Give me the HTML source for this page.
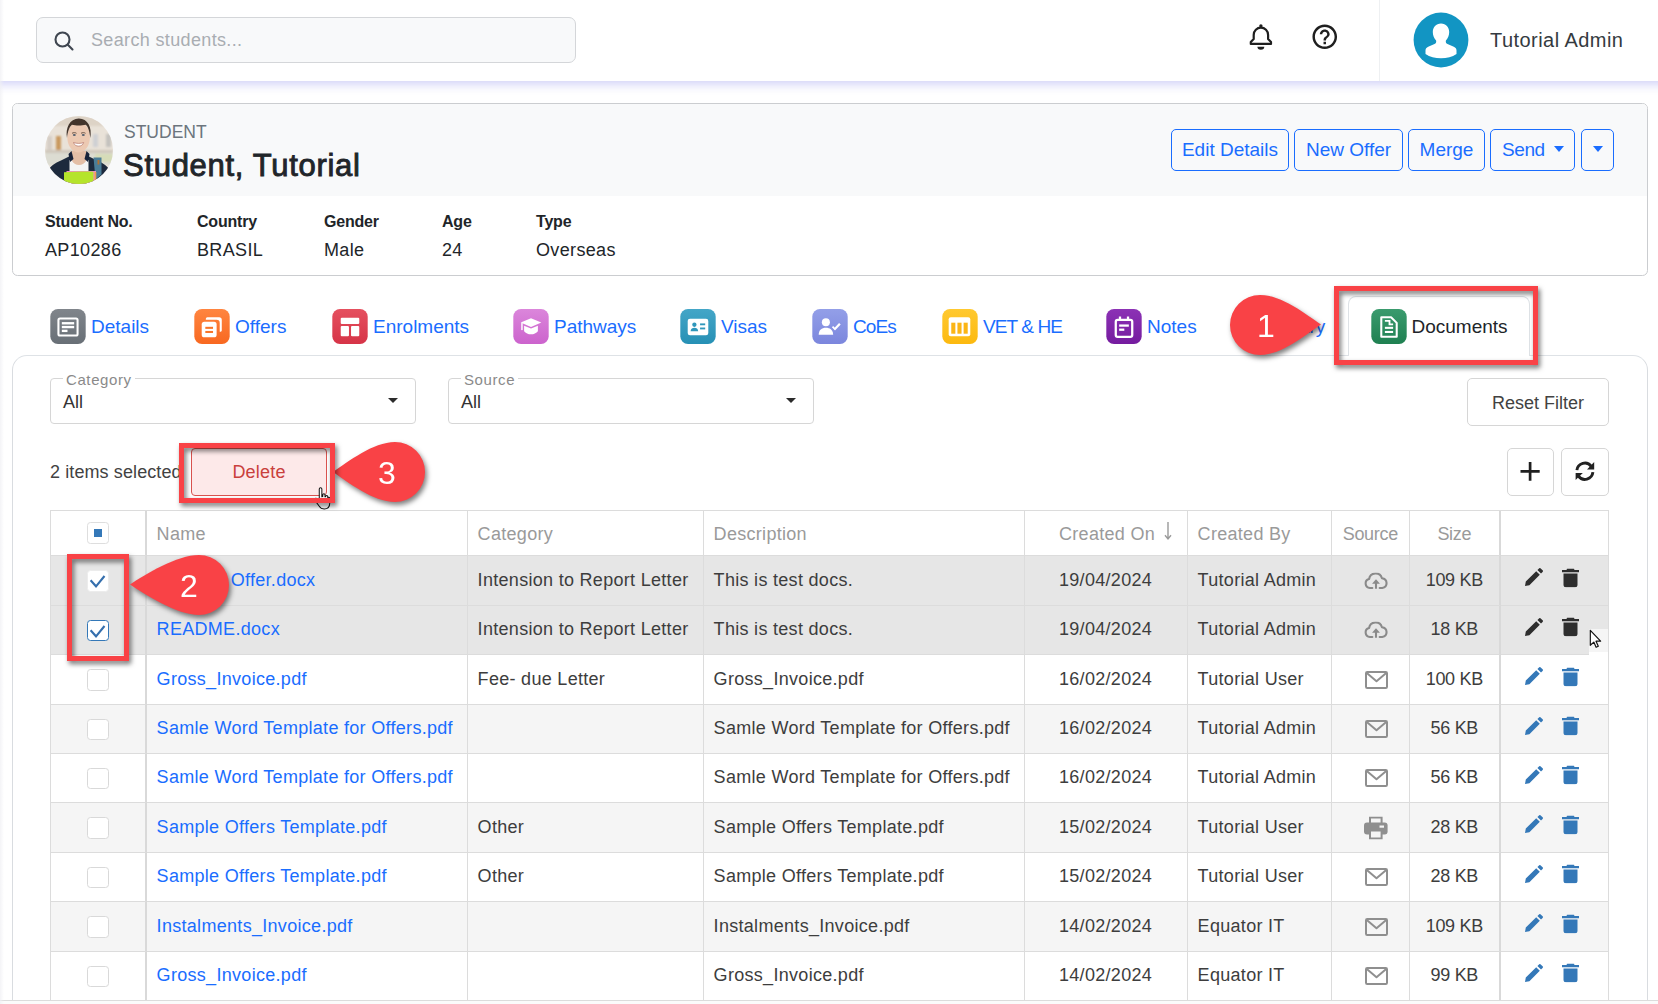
<!DOCTYPE html>
<html lang="en">
<head>
<meta charset="utf-8">
<title>Student Documents</title>
<style>
*{box-sizing:border-box;margin:0;padding:0}
html,body{width:1658px;height:1004px;overflow:hidden;background:#fff}
body{font-family:"Liberation Sans",Arial,sans-serif;color:#212529;position:relative}
.abs{position:absolute}
/* top bar */
#topbar{left:0;top:0;width:1658px;height:81px;background:#fff;;z-index:2}
#leftshade{left:0;top:0;width:4px;height:1004px;background:linear-gradient(90deg,rgba(240,240,244,.75),rgba(255,255,255,0));z-index:3}
#search{left:36px;top:17px;width:540px;height:46px;border:1px solid #d4d6d9;border-radius:7px;background:#f8f9fa}
#search span{position:absolute;left:54px;top:12px;font-size:18px;color:#a9adb2;letter-spacing:.35px}
#usersep{left:1379px;top:0;width:1px;height:81px;background:#eef0f2}
#uname{left:1490px;top:29px;font-size:20px;color:#343a40;letter-spacing:.45px}
/* card */
#card{left:12px;top:103px;width:1636px;height:173px;border:1px solid #cbcdd0;border-radius:5.500px;background:#fff;overflow:hidden}
#cardhead{left:0;top:0;width:100%;height:92px;background:#f8f9fa}
#stu-l{left:111px;top:18px;font-size:17.5px;color:#6c757d}
#stu-n{left:110px;top:44px;font-size:31px;font-weight:normal;-webkit-text-stroke:.9px #212529;color:#212529;letter-spacing:.7px}
.btn{position:absolute;top:25px;height:42px;border:1px solid #1a6dff;border-radius:5px;color:#1a6dff;font-size:19px;line-height:40px;text-align:center;background:#f8f9fa;white-space:nowrap}
.fl{position:absolute;top:109px;font-size:16px;font-weight:bold;color:#212529;letter-spacing:-.2px}
.fv{position:absolute;top:136px;font-size:18px;color:#212529;letter-spacing:.35px}

.car{position:absolute;top:16px;width:0;height:0;border-left:5.5px solid transparent;border-right:5.5px solid transparent;border-top:6px solid #1a6dff}
/* tabs */
#tabline{left:27px;top:355px;width:1610px;height:1px;background:#dee2e6}
.tab{position:absolute;top:309px;height:34px;white-space:nowrap;font-size:19px;line-height:34px;color:#1a6dff}
.tab svg{position:absolute;left:0;top:0}
.tab span{position:absolute;left:41px;top:1px}
#acttab{left:1348px;top:296px;width:182px;height:60px;border:1px solid #dee2e6;border-bottom:0;border-radius:8px 8px 0 0;background:#fff}
#panel{left:12px;top:355px;width:1636px;height:700px;border:1px solid #d9dce0;border-top-color:#dee2e6;border-radius:15px 15px 0 0}
/* filters */
.sel{position:absolute;top:378px;height:46px;width:366px;border:1px solid #d6d6d6;border-radius:4px;background:#fff}
.sel label{position:absolute;left:12px;top:-8px;padding:0 3px;background:#fff;font-size:15px;line-height:18px;color:#8a8a8a;letter-spacing:.6px}
.sel b{position:absolute;left:12px;top:12px;font-weight:normal;font-size:18px;line-height:22px;color:#333}
.sel i{position:absolute;right:17.500px;top:19px;width:0;height:0;border-left:5px solid transparent;border-right:5px solid transparent;border-top:5.500px solid #2b2b2b}
.gbtn{position:absolute;overflow:hidden;border:1px solid #d6d6d6;border-radius:4px;background:#fff;color:#424242;font-size:18px;text-align:center}
#selinfo{left:50px;top:461px;font-size:18px;line-height:22px;color:#424242;letter-spacing:.1px}
#delbtn{left:191px;top:448px;width:136px;height:48px;border:1px solid #d9534f;border-radius:4px;background:#fde9e9;color:#c9403c;font-size:18px;line-height:46px;text-align:center;letter-spacing:.2px}

/* grid */
#grid{left:50px;top:510px;width:1559px;letter-spacing:.3px;border-collapse:separate;border-spacing:0;table-layout:fixed;font-size:18px;color:#3d3d3d;border-top:1px solid #dcdcdc;border-left:1px solid #dcdcdc}
#grid td,#grid th{border-right:1px solid #dcdcdc;border-bottom:1px solid #dcdcdc;padding:0 10px 1px 9.600px;white-space:nowrap;overflow:hidden;text-align:left;font-weight:normal;position:relative}
#grid th{height:45px;color:#9a9a9a;background:#fff;padding-top:3px}
#grid td{height:49px}
#grid tr.h50 td{height:50px}
#grid tr.alt td{background:#f5f5f5}
#grid tr.sel2 td{background:#e6e6e6}
#grid .c{text-align:center;letter-spacing:-.3px}
#grid a{color:#1a6dff;text-decoration:none}
#grid td.k,#grid th.k{border-right:2px solid #d9d9d9}
#grid td.kl,#grid th.kl{border-left:1px solid #d2d2d2}
.cb{display:inline-block;width:21.500px;height:21.500px;border:1px solid #d9d9d9;border-radius:3.500px;background:#fff;vertical-align:middle;position:relative;top:.5px;left:0}
.cbh{display:inline-block;width:21.500px;height:21.500px;border:1px solid #dedede;border-radius:3.500px;background:#fff;vertical-align:middle;position:relative;top:-1.500px;left:0}
.cbh::after{content:"";position:absolute;left:5.500px;top:5.500px;width:8px;height:8px;background:#3478b8}
.cb svg{position:absolute;left:-1px;top:-1px}
.ic{position:absolute;top:50%;transform:translateY(-50%)}

/* annotations */
.rr{position:absolute;border:5px solid #f94246;filter:drop-shadow(2px 3px 2.500px rgba(0,0,0,.55));z-index:5}
.co{position:absolute;left:0;top:0;z-index:6;filter:drop-shadow(2px 3px 2.500px rgba(0,0,0,.5));overflow:visible}
.co text{font-family:"Liberation Sans",Arial,sans-serif;font-size:32px;fill:#fff}
</style>
</head>
<body>
<div class="abs" style="left:-40px;top:0;width:1738px;height:81px;box-shadow:0 3px 10px rgba(105,105,230,.32);z-index:1"></div>
<div id="topbar" class="abs">
  <div id="search" class="abs"><span>Search students...</span></div>
  
  <svg class="abs" style="left:52px;top:29px" width="24" height="24" viewBox="0 0 24 24" fill="none" stroke="#3f4650" stroke-width="2.1" stroke-linecap="round"><circle cx="10.5" cy="10.5" r="7"/><path d="M15.8 15.8 20.5 20.5"/></svg>
  <svg class="abs" style="left:1244px;top:20px" width="34" height="34" viewBox="0 0 34 34"><path d="M9.700 18.900V14.900a7.200 7.200 0 0 1 14.400 0V18.900l2.900 3v2H6.800v-2z" fill="none" stroke="#1f1f1f" stroke-width="2.200" stroke-linejoin="round"/><circle cx="16.900" cy="5.900" r="1.700" fill="#1f1f1f"/><path d="M13.400 26.800h6.900a3.450 2.900 0 0 1-6.900 0z" fill="#1f1f1f"/></svg>
  <svg class="abs" style="left:1310.350px;top:21.950px" width="29.500" height="29.500" viewBox="0 0 24 24"><path fill="#1f1f1f" fill-rule="evenodd" d="M11 18h2v-2h-2v2zm1-16C6.480 2 2 6.480 2 12s4.480 10 10 10 10-4.480 10-10S17.520 2 12 2zm0 18c-4.410 0-8-3.590-8-8s3.590-8 8-8 8 3.590 8 8-3.590 8-8 8zm0-14c-2.210 0-4 1.790-4 4h2c0-1.100.900-2 2-2s2 .900 2 2c0 2-3 1.750-3 5h2c0-2.250 3-2.500 3-5 0-2.210-1.790-4-4-4z"/></svg>
  <svg class="abs" style="left:1412.500px;top:12px" width="56" height="56" viewBox="0 0 56 56"><circle cx="28" cy="28" r="27.400" fill="#1295c3"/><path fill="#fff" d="M28 11.500c-5 0-8.200 3.700-8.200 8.600 0 3.300 1.300 6.500 3.300 8.300.4 1.700-.2 2.800-1.600 3.500l-6.300 2.800c-1.800.8-2.700 2-2.700 3.900v3.400c4.300 2.900 9.500 4.300 15.500 4.300s11.200-1.400 15.500-4.300v-3.400c0-1.900-.9-3.100-2.700-3.900l-6.300-2.800c-1.400-.7-2-1.800-1.600-3.500 2-1.800 3.300-5 3.300-8.300 0-4.900-3.200-8.600-8.200-8.600z"/></svg>
  <div id="usersep" class="abs"></div>
  <div id="uname" class="abs">Tutorial Admin</div>
</div>
<div id="leftshade" class="abs"></div>

<div id="card" class="abs">
  <div id="cardhead" class="abs"></div>
  <svg class="abs" style="left:31px;top:11px" width="70" height="70" viewBox="-1 -1 70 70"><defs><clipPath id="pc"><circle cx="34" cy="34" r="34"/></clipPath><filter id="pb" x="-10%" y="-10%" width="120%" height="120%"><feGaussianBlur stdDeviation="1.300"/></filter></defs>
<g clip-path="url(#pc)"><rect width="68" height="68" fill="#e9e2d8"/>
<g filter="url(#pb)"><rect x="0" y="0" width="68" height="10" fill="#ddd3c6"/><rect x="11" y="20" width="5" height="14" fill="#c9995e"/><rect x="2" y="20" width="5" height="14" fill="#d5cec6"/><rect x="48" y="18" width="5" height="13" fill="#cfd0d4"/><rect x="61" y="18" width="5" height="13" fill="#c4c2be"/><rect x="0" y="34" width="68" height="3" fill="#cfc7bb"/><rect x="0" y="37" width="68" height="12" fill="#dcdcd2"/><rect x="50" y="38" width="18" height="8" fill="#d6dcb8"/></g>
<path d="M2 56c3-6 8-9 14-11.500l8-4 3-3.500h14l3 3.500 8 4c6 2.500 11 5.500 14 11.500v14H2z" fill="#1d2a3d"/>
<path d="M48.500 41.500h8v17l-6 5z" fill="#4b7d97"/><rect x="52.500" y="44" width="1.800" height="4.500" fill="#b5702f"/>
<path d="M24.500 44h19v13h-19z" fill="#f4f4f4"/>
<path d="M26.500 35h15v9c-1.500 3.500-4.500 5-7.500 5s-6-1.500-7.500-5z" fill="#e3bea6"/>
<path d="M23.500 38l3-3 2 8-3.500 3zM44.500 38l-3-3-2 8 3.500 3z" fill="#18233a"/>
<ellipse cx="33.600" cy="21.300" rx="11.300" ry="15.200" fill="#ecc9b2"/>
<path d="M22 22c-1.800-10 2.800-19.500 11.800-19.500s13.500 9 11.500 19.500c-.5-6-2.300-11.800-4.600-13.300-4 1-10 1-13.800 0-2.600 2-4.300 7.300-4.900 13.300z" fill="#43352c"/>
<path d="M27 17.300c1.500-.9 3.200-.9 4.500 0M36 17.300c1.500-.9 3.200-.9 4.500 0" stroke="#6a5446" stroke-width="1" fill="none"/><ellipse cx="29.300" cy="19" rx="1.500" ry=".9" fill="#55606e"/><ellipse cx="38.300" cy="19" rx="1.500" ry=".9" fill="#55606e"/>
<path d="M28.500 26.500c3.500 1.200 7 1.200 10.200 0-.8 2.600-2.800 3.600-5.100 3.600s-4.300-1-5.100-3.600z" fill="#fff" stroke="#b5766a" stroke-width=".7"/>
<path d="M21.500 55h29.500v13H21.500z" fill="#f08fc6"/><path d="M49.500 56h1.800v12h-1.800z" fill="#f2a04e"/>
<path d="M19 56.300c10-.8 20-.8 29.500-.5v13H19z" fill="#b5e42b"/>
</g></svg>
  <div id="stu-l" class="abs">STUDENT</div>
  <div id="stu-n" class="abs">Student, Tutorial</div>
  <div class="btn" style="left:1158px;width:118px">Edit Details</div>
  <div class="btn" style="left:1281px;width:109px">New Offer</div>
  <div class="btn" style="left:1395px;width:77px">Merge</div>
  <div class="btn" style="left:1477px;width:85px;text-align:left;padding-left:11px;letter-spacing:-.4px">Send<i class="car" style="left:63px"></i></div>
  <div class="btn" style="left:1568px;width:33px"><i class="car" style="left:11px"></i></div>
  <div class="fl" style="left:32px">Student No.</div><div class="fv" style="left:32px">AP10286</div>
  <div class="fl" style="left:184px">Country</div><div class="fv" style="left:184px">BRASIL</div>
  <div class="fl" style="left:311px">Gender</div><div class="fv" style="left:311px">Male</div>
  <div class="fl" style="left:429px">Age</div><div class="fv" style="left:429px">24</div>
  <div class="fl" style="left:523px">Type</div><div class="fv" style="left:523px">Overseas</div>
</div>
<div id="panel" class="abs"></div>
<div id="acttab" class="abs"></div>
<div class="tab" style="left:50px"><svg width="36" height="35" viewBox="0 0 35 34" preserveAspectRatio="none"><defs><linearGradient id="g1" x1="0" y1="0" x2="0" y2="1"><stop offset="0" stop-color="#80858b"/><stop offset="1" stop-color="#686f76"/></linearGradient></defs><rect x=".3" y="0" width="34.400" height="34" rx="7.500" fill="url(#g1)"/><rect x="8.200" y="9.200" width="18.600" height="16.600" rx="1.500" fill="none" stroke="#fff" stroke-width="2"/><rect x="11.500" y="12.700" width="12" height="2.300" fill="#fff"/><rect x="11.500" y="16.400" width="12" height="2.300" fill="#fff"/><rect x="11.500" y="20.100" width="5.500" height="2.300" fill="#fff"/></svg><span>Details</span></div>
<div class="tab" style="left:194px"><svg width="36" height="35" viewBox="0 0 35 34" preserveAspectRatio="none"><defs><linearGradient id="g2" x1="0" y1="0" x2="0" y2="1"><stop offset="0" stop-color="#ff8540"/><stop offset="1" stop-color="#f86820"/></linearGradient></defs><rect x=".3" y="0" width="34.400" height="34" rx="7.500" fill="url(#g2)"/><path d="M13 8h11.500a2.500 2.500 0 0 1 2.500 2.500V21a1 1 0 0 1-1 1h-1V13.500a3 3 0 0 0-3-3H11.500V9.500A1.500 1.500 0 0 1 13 8z" fill="#fff"/><rect x="7.500" y="12.500" width="14.500" height="15" rx="2.500" fill="#fff"/><rect x="11" y="17.300" width="7.500" height="2" fill="#f97428"/><rect x="11" y="21.300" width="7.500" height="2" fill="#f97428"/></svg><span>Offers</span></div>
<div class="tab" style="left:332px"><svg width="36" height="35" viewBox="0 0 35 34" preserveAspectRatio="none"><defs><linearGradient id="g3" x1="0" y1="0" x2="0" y2="1"><stop offset="0" stop-color="#e5505f"/><stop offset="1" stop-color="#d63447"/></linearGradient></defs><rect x=".3" y="0" width="34.400" height="34" rx="7.500" fill="url(#g3)"/><rect x="8.500" y="8.500" width="18" height="6" rx="1" fill="#fff"/><rect x="8.500" y="16.500" width="8" height="10" rx="1" fill="#fff"/><rect x="18.500" y="16.500" width="8" height="10" rx="1" fill="#fff"/></svg><span>Enrolments</span></div>
<div class="tab" style="left:513px"><svg width="36" height="35" viewBox="0 0 35 34" preserveAspectRatio="none"><defs><linearGradient id="g4" x1="0" y1="0" x2="0" y2="1"><stop offset="0" stop-color="#db86db"/><stop offset="1" stop-color="#cc63cd"/></linearGradient></defs><rect x=".3" y="0" width="34.400" height="34" rx="7.500" fill="url(#g4)"/><path d="M17.500 9 27.500 13.200 17.500 17.400 7.500 13.200z" fill="#fff"/><path d="M10.800 16.200v5.300c1.500 2 4 3 6.700 3s5.200-1 6.700-3v-5.300l-6.700 2.800z" fill="#fff"/><rect x="8" y="13.500" width="1.400" height="7" fill="#fff"/></svg><span>Pathways</span></div>
<div class="tab" style="left:680px"><svg width="36" height="35" viewBox="0 0 35 34" preserveAspectRatio="none"><defs><linearGradient id="g5" x1="0" y1="0" x2="0" y2="1"><stop offset="0" stop-color="#44a6c7"/><stop offset="1" stop-color="#2690b5"/></linearGradient></defs><rect x=".3" y="0" width="34.400" height="34" rx="7.500" fill="url(#g5)"/><rect x="7.500" y="9.500" width="20" height="16" rx="2.200" fill="#fff"/><circle cx="14" cy="15.300" r="2.100" fill="#2f97bb"/><path d="M10.300 21.500c.3-2.300 1.700-3.300 3.700-3.300s3.400 1 3.700 3.300z" fill="#2f97bb"/><rect x="19.500" y="14" width="5" height="1.800" fill="#2f97bb"/><rect x="19.500" y="18" width="5" height="1.800" fill="#2f97bb"/></svg><span>Visas</span></div>
<div class="tab" style="left:812px"><svg width="36" height="35" viewBox="0 0 35 34" preserveAspectRatio="none"><defs><linearGradient id="g6" x1="0" y1="0" x2="0" y2="1"><stop offset="0" stop-color="#939fe8"/><stop offset="1" stop-color="#7b86dd"/></linearGradient></defs><rect x=".3" y="0" width="34.400" height="34" rx="7.500" fill="url(#g6)"/><circle cx="13.500" cy="12.800" r="3.900" fill="#fff"/><path d="M6.500 25c.3-4.800 2.800-6.800 7-6.800 2 0 3.600.5 4.800 1.500l1.300 1.500c.6 1 .9 2.300 1 3.800z" fill="#fff"/><path d="M19.800 17.200l2.300 2.400 5-5.300" fill="none" stroke="#fff" stroke-width="2.200"/><path d="M18 17.200l4.100 4.300" fill="none" stroke="#8790e1" stroke-width="1.200"/></svg><span style="letter-spacing:-.9px">CoEs</span></div>
<div class="tab" style="left:942px"><svg width="36" height="35" viewBox="0 0 35 34" preserveAspectRatio="none"><defs><linearGradient id="g7" x1="0" y1="0" x2="0" y2="1"><stop offset="0" stop-color="#ffc930"/><stop offset="1" stop-color="#fcb90f"/></linearGradient></defs><rect x=".3" y="0" width="34.400" height="34" rx="7.500" fill="url(#g7)"/><rect x="6.500" y="8" width="21" height="18.500" rx="2" fill="#fff"/><rect x="9" y="13.300" width="4" height="10.700" fill="#fbb516"/><rect x="15" y="13.300" width="4" height="10.700" fill="#fbb516"/><rect x="21" y="13.300" width="4" height="10.700" fill="#fbb516"/></svg><span style="letter-spacing:-.9px">VET &amp; HE</span></div>
<div class="tab" style="left:1106px"><svg width="36" height="35" viewBox="0 0 35 34" preserveAspectRatio="none"><defs><linearGradient id="g8" x1="0" y1="0" x2="0" y2="1"><stop offset="0" stop-color="#8c32b5"/><stop offset="1" stop-color="#751c9f"/></linearGradient></defs><rect x=".3" y="0" width="34.400" height="34" rx="7.500" fill="url(#g8)"/><rect x="9.500" y="10.500" width="16" height="16.500" rx="1.800" fill="none" stroke="#fff" stroke-width="2.200"/><rect x="12.500" y="7.300" width="2.200" height="4" fill="#fff"/><rect x="20.300" y="7.300" width="2.200" height="4" fill="#fff"/><rect x="12.800" y="15" width="9.400" height="2.200" fill="#fff"/><rect x="12.800" y="19" width="5" height="2.200" fill="#fff"/></svg><span>Notes</span></div>
<div class="tab" style="left:1240px"><svg width="36" height="35" viewBox="0 0 35 34" preserveAspectRatio="none"><defs><linearGradient id="g9" x1="0" y1="0" x2="0" y2="1"><stop offset="0" stop-color="#5bb0e8"/><stop offset="1" stop-color="#3a93d6"/></linearGradient></defs><rect x=".3" y="0" width="34.400" height="34" rx="7.500" fill="url(#g9)"/></svg><span>Diary</span></div>
<div class="tab" style="left:1370.500px"><svg width="36" height="35" viewBox="0 0 35 34" preserveAspectRatio="none"><defs><linearGradient id="g10" x1="0" y1="0" x2="0" y2="1"><stop offset="0" stop-color="#3a9b6e"/><stop offset="1" stop-color="#1f8051"/></linearGradient></defs><rect x=".3" y="0" width="34.400" height="34" rx="7.500" fill="url(#g10)"/><path d="M10 8h9.500l5.500 5.500V27H10z" fill="none" stroke="#fff" stroke-width="2" stroke-linejoin="round"/><path d="M13.500 11.500h4.500v3.500h3.500" fill="none" stroke="#fff" stroke-width="1.800"/><rect x="13.500" y="17.300" width="8" height="2" fill="#fff"/><rect x="13.500" y="21.300" width="8" height="2" fill="#fff"/></svg><span style="color:#212529">Documents</span></div>


<div class="sel" style="left:50px"><label>Category</label><b>All</b><i></i></div>
<div class="sel" style="left:448px"><label>Source</label><b>All</b><i></i></div>
<div class="gbtn" style="left:1467px;top:378px;width:142px;height:48px;line-height:48px;border-radius:5px">Reset Filter</div>
<div id="selinfo" class="abs">2 items selected</div>
<div id="delbtn" class="abs">Delete</div>
<div class="gbtn" style="left:1507px;top:448px;width:47px;height:48px;border-radius:5px"><svg style="position:absolute;left:0;top:0" width="45" height="46" viewBox="0 0 45 46"><path d="M22.100 12.900v18.800M12.500 22.300h19.200" stroke="#1f1f1f" stroke-width="2.700" fill="none"/></svg></div>
<div class="gbtn" style="left:1561px;top:448px;width:48px;height:48px;border-radius:5px"><svg style="position:absolute;left:0;top:0" width="46" height="46" viewBox="0 0 46 46" fill="none" stroke="#222" stroke-width="2.900"><path d="M14.900 21.200A8 8 0 0 1 29.300 17.300"/><path d="M30.900 23.200A8 8 0 0 1 16.500 27.100"/><path d="M32.200 13.100v7.400h-7.200z" fill="#222" stroke="none"/><path d="M13.600 31.100v-7.200h7.200z" fill="#222" stroke="none"/></svg></div>
<table id="grid" class="abs"><colgroup><col style="width:96px"><col style="width:321px"><col style="width:236px"><col style="width:321px"><col style="width:163px"><col style="width:144px"><col style="width:78px"><col style="width:91px"><col style="width:108px"></colgroup>
<tr><th class="c k"><span class="cbh"></span></th><th>Name</th><th>Category</th><th>Description</th><th style="padding-left:34px">Created On <svg style="position:absolute;left:137.500px;top:10px" width="10" height="20" viewBox="0 0 10 20" fill="none" stroke="#9a9a9a" stroke-width="1.400"><path d="M5 1v17M2 14.300 5 18l3-3.700"/></svg></th><th>Created By</th><th class="c">Source</th><th class="c k">Size</th><th></th></tr>
<tr class="h50 sel2"><td class="c k"><span class="cb" style="border-color:#ececec"><svg width="21" height="21" viewBox="0 0 21 21" fill="none" stroke="#356fad" stroke-width="2.100"><path d="M3.600 10.300 9 16.300 17.500 6"/></svg></span></td><td><a>Letter of Offer.docx</a></td><td>Intension to Report Letter</td><td>This is test docs.</td><td style="padding-left:34px">19/04/2024</td><td>Tutorial Admin</td><td><svg class="ic" style="left:32.400px;margin-top:.2px" width="24" height="17" viewBox="0 0 23 17" preserveAspectRatio="none" fill="none" stroke="#8a8a8a" stroke-width="2" stroke-linecap="round" stroke-linejoin="round"><path d="M8 15.500H5.700A4.600 4.600 0 0 1 4.900 6.500 6.300 6.300 0 0 1 17.200 5.700 4.950 4.950 0 0 1 17.500 15.500H15"/><path d="M11.500 16.300v-6" stroke-linecap="butt"/><path d="M11.500 6.800 15.300 11.300H7.700z" fill="#8a8a8a" stroke="none"/></svg></td><td class="c k">109 KB</td><td><svg class="ic" style="left:23.700px;margin-top:-3.500px" width="18" height="18" viewBox="0 0 18 18"><path fill="#2e2e2e" d="M0 18 .8 13.600 11.200 3.200 14.800 6.800 4.400 17.200zM12.400 2 14 .4a1.200 1.200 0 0 1 1.700 0L17.600 2.300a1.200 1.200 0 0 1 0 1.700L16 5.600z"/></svg><svg class="ic" style="left:60.900px;margin-top:-3px" width="17" height="19" viewBox="0 0 17 19"><path fill="#2e2e2e" d="M5.500 0h6a.8.8 0 0 1 .8.800V1.500H17v2.300H0V1.500h4.700V.8A.8.8 0 0 1 5.500 0zM1.500 5h14v11.300a2.500 2.500 0 0 1-2.500 2.500H4a2.500 2.500 0 0 1-2.500-2.500z"/></svg></td></tr>
<tr class="sel2"><td class="c k"><span class="cb" style="border-color:#3478b8"><svg width="21" height="21" viewBox="0 0 21 21" fill="none" stroke="#356fad" stroke-width="2.100"><path d="M3.600 10.300 9 16.300 17.500 6"/></svg></span></td><td><a>README.docx</a></td><td>Intension to Report Letter</td><td>This is test docs.</td><td style="padding-left:34px">19/04/2024</td><td>Tutorial Admin</td><td><svg class="ic" style="left:32.400px;margin-top:.2px" width="24" height="17" viewBox="0 0 23 17" preserveAspectRatio="none" fill="none" stroke="#8a8a8a" stroke-width="2" stroke-linecap="round" stroke-linejoin="round"><path d="M8 15.500H5.700A4.600 4.600 0 0 1 4.900 6.500 6.300 6.300 0 0 1 17.200 5.700 4.950 4.950 0 0 1 17.500 15.500H15"/><path d="M11.500 16.300v-6" stroke-linecap="butt"/><path d="M11.500 6.800 15.300 11.300H7.700z" fill="#8a8a8a" stroke="none"/></svg></td><td class="c k">18 KB</td><td><svg class="ic" style="left:23.700px;margin-top:-3.500px" width="18" height="18" viewBox="0 0 18 18"><path fill="#2e2e2e" d="M0 18 .8 13.600 11.200 3.200 14.800 6.800 4.400 17.200zM12.400 2 14 .4a1.200 1.200 0 0 1 1.700 0L17.600 2.300a1.200 1.200 0 0 1 0 1.700L16 5.600z"/></svg><svg class="ic" style="left:60.900px;margin-top:-3px" width="17" height="19" viewBox="0 0 17 19"><path fill="#2e2e2e" d="M5.500 0h6a.8.8 0 0 1 .8.800V1.500H17v2.300H0V1.500h4.700V.8A.8.8 0 0 1 5.500 0zM1.500 5h14v11.300a2.500 2.500 0 0 1-2.500 2.500H4a2.500 2.500 0 0 1-2.500-2.500z"/></svg></td></tr>
<tr class="h50 "><td class="c k"><span class="cb"></span></td><td><a>Gross_Invoice.pdf</a></td><td>Fee- due Letter</td><td>Gross_Invoice.pdf</td><td style="padding-left:34px">16/02/2024</td><td>Tutorial User</td><td><svg class="ic" style="left:32.500px;margin-top:0px" width="23" height="18" viewBox="0 0 23 18" fill="none" stroke="#8f8f8f" stroke-width="2" stroke-linejoin="round"><rect x="1" y="1" width="21" height="16" rx="1.200"/><path d="M1.500 1.800 11.500 10.300 21.500 1.800"/></svg></td><td class="c k">100 KB</td><td><svg class="ic" style="left:23.700px;margin-top:-3.500px" width="18" height="18" viewBox="0 0 18 18"><path fill="#3478b8" d="M0 18 .8 13.600 11.200 3.200 14.800 6.800 4.400 17.200zM12.400 2 14 .4a1.200 1.200 0 0 1 1.700 0L17.600 2.300a1.200 1.200 0 0 1 0 1.700L16 5.600z"/></svg><svg class="ic" style="left:60.900px;margin-top:-3px" width="17" height="19" viewBox="0 0 17 19"><path fill="#3478b8" d="M5.500 0h6a.8.8 0 0 1 .8.800V1.500H17v2.300H0V1.500h4.700V.8A.8.8 0 0 1 5.500 0zM1.500 5h14v11.300a2.500 2.500 0 0 1-2.500 2.500H4a2.500 2.500 0 0 1-2.500-2.500z"/></svg></td></tr>
<tr class="alt"><td class="c k"><span class="cb"></span></td><td><a>Samle Word Template for Offers.pdf</a></td><td></td><td>Samle Word Template for Offers.pdf</td><td style="padding-left:34px">16/02/2024</td><td>Tutorial Admin</td><td><svg class="ic" style="left:32.500px;margin-top:0px" width="23" height="18" viewBox="0 0 23 18" fill="none" stroke="#8f8f8f" stroke-width="2" stroke-linejoin="round"><rect x="1" y="1" width="21" height="16" rx="1.200"/><path d="M1.500 1.800 11.500 10.300 21.500 1.800"/></svg></td><td class="c k">56 KB</td><td><svg class="ic" style="left:23.700px;margin-top:-3.500px" width="18" height="18" viewBox="0 0 18 18"><path fill="#3478b8" d="M0 18 .8 13.600 11.200 3.200 14.800 6.800 4.400 17.200zM12.400 2 14 .4a1.200 1.200 0 0 1 1.700 0L17.600 2.300a1.200 1.200 0 0 1 0 1.700L16 5.600z"/></svg><svg class="ic" style="left:60.900px;margin-top:-3px" width="17" height="19" viewBox="0 0 17 19"><path fill="#3478b8" d="M5.500 0h6a.8.8 0 0 1 .8.800V1.500H17v2.300H0V1.500h4.700V.8A.8.8 0 0 1 5.500 0zM1.500 5h14v11.300a2.500 2.500 0 0 1-2.500 2.500H4a2.500 2.500 0 0 1-2.500-2.500z"/></svg></td></tr>
<tr class=""><td class="c k"><span class="cb"></span></td><td><a>Samle Word Template for Offers.pdf</a></td><td></td><td>Samle Word Template for Offers.pdf</td><td style="padding-left:34px">16/02/2024</td><td>Tutorial Admin</td><td><svg class="ic" style="left:32.500px;margin-top:0px" width="23" height="18" viewBox="0 0 23 18" fill="none" stroke="#8f8f8f" stroke-width="2" stroke-linejoin="round"><rect x="1" y="1" width="21" height="16" rx="1.200"/><path d="M1.500 1.800 11.500 10.300 21.500 1.800"/></svg></td><td class="c k">56 KB</td><td><svg class="ic" style="left:23.700px;margin-top:-3.500px" width="18" height="18" viewBox="0 0 18 18"><path fill="#3478b8" d="M0 18 .8 13.600 11.200 3.200 14.800 6.800 4.400 17.200zM12.400 2 14 .4a1.200 1.200 0 0 1 1.700 0L17.600 2.300a1.200 1.200 0 0 1 0 1.700L16 5.600z"/></svg><svg class="ic" style="left:60.900px;margin-top:-3px" width="17" height="19" viewBox="0 0 17 19"><path fill="#3478b8" d="M5.500 0h6a.8.8 0 0 1 .8.800V1.500H17v2.300H0V1.500h4.700V.8A.8.8 0 0 1 5.500 0zM1.500 5h14v11.300a2.500 2.500 0 0 1-2.500 2.500H4a2.500 2.500 0 0 1-2.500-2.500z"/></svg></td></tr>
<tr class="h50 alt"><td class="c k"><span class="cb"></span></td><td><a>Sample Offers Template.pdf</a></td><td>Other</td><td>Sample Offers Template.pdf</td><td style="padding-left:34px">15/02/2024</td><td>Tutorial User</td><td><svg class="ic" style="left:32.300px;margin-top:0px" width="24" height="23" viewBox="0 0 24 23"><rect x="0" y="6" width="23.600" height="12" rx="3" fill="#8f8f8f"/><rect x="6" y="1" width="11.600" height="6" fill="#f5f5f5" stroke="#8f8f8f" stroke-width="2"/><rect x="6" y="14" width="11.600" height="8" fill="#f5f5f5" stroke="#8f8f8f" stroke-width="2"/><rect x="15.500" y="9" width="4.500" height="2.200" fill="#f5f5f5"/></svg></td><td class="c k">28 KB</td><td><svg class="ic" style="left:23.700px;margin-top:-3.500px" width="18" height="18" viewBox="0 0 18 18"><path fill="#3478b8" d="M0 18 .8 13.600 11.200 3.200 14.800 6.800 4.400 17.200zM12.400 2 14 .4a1.200 1.200 0 0 1 1.700 0L17.600 2.300a1.200 1.200 0 0 1 0 1.700L16 5.600z"/></svg><svg class="ic" style="left:60.900px;margin-top:-3px" width="17" height="19" viewBox="0 0 17 19"><path fill="#3478b8" d="M5.500 0h6a.8.8 0 0 1 .8.800V1.500H17v2.300H0V1.500h4.700V.8A.8.8 0 0 1 5.500 0zM1.500 5h14v11.300a2.500 2.500 0 0 1-2.500 2.500H4a2.500 2.500 0 0 1-2.500-2.500z"/></svg></td></tr>
<tr class=""><td class="c k"><span class="cb"></span></td><td><a>Sample Offers Template.pdf</a></td><td>Other</td><td>Sample Offers Template.pdf</td><td style="padding-left:34px">15/02/2024</td><td>Tutorial User</td><td><svg class="ic" style="left:32.500px;margin-top:0px" width="23" height="18" viewBox="0 0 23 18" fill="none" stroke="#8f8f8f" stroke-width="2" stroke-linejoin="round"><rect x="1" y="1" width="21" height="16" rx="1.200"/><path d="M1.500 1.800 11.500 10.300 21.500 1.800"/></svg></td><td class="c k">28 KB</td><td><svg class="ic" style="left:23.700px;margin-top:-3.500px" width="18" height="18" viewBox="0 0 18 18"><path fill="#3478b8" d="M0 18 .8 13.600 11.200 3.200 14.800 6.800 4.400 17.200zM12.400 2 14 .4a1.200 1.200 0 0 1 1.700 0L17.600 2.300a1.200 1.200 0 0 1 0 1.700L16 5.600z"/></svg><svg class="ic" style="left:60.900px;margin-top:-3px" width="17" height="19" viewBox="0 0 17 19"><path fill="#3478b8" d="M5.500 0h6a.8.8 0 0 1 .8.800V1.500H17v2.300H0V1.500h4.700V.8A.8.8 0 0 1 5.500 0zM1.500 5h14v11.300a2.500 2.500 0 0 1-2.500 2.500H4a2.500 2.500 0 0 1-2.500-2.500z"/></svg></td></tr>
<tr class="h50 alt"><td class="c k"><span class="cb"></span></td><td><a>Instalments_Invoice.pdf</a></td><td></td><td>Instalments_Invoice.pdf</td><td style="padding-left:34px">14/02/2024</td><td>Equator IT</td><td><svg class="ic" style="left:32.500px;margin-top:0px" width="23" height="18" viewBox="0 0 23 18" fill="none" stroke="#8f8f8f" stroke-width="2" stroke-linejoin="round"><rect x="1" y="1" width="21" height="16" rx="1.200"/><path d="M1.500 1.800 11.500 10.300 21.500 1.800"/></svg></td><td class="c k">109 KB</td><td><svg class="ic" style="left:23.700px;margin-top:-3.500px" width="18" height="18" viewBox="0 0 18 18"><path fill="#3478b8" d="M0 18 .8 13.600 11.200 3.200 14.800 6.800 4.400 17.200zM12.400 2 14 .4a1.200 1.200 0 0 1 1.700 0L17.600 2.300a1.200 1.200 0 0 1 0 1.700L16 5.600z"/></svg><svg class="ic" style="left:60.900px;margin-top:-3px" width="17" height="19" viewBox="0 0 17 19"><path fill="#3478b8" d="M5.500 0h6a.8.8 0 0 1 .8.800V1.500H17v2.300H0V1.500h4.700V.8A.8.8 0 0 1 5.500 0zM1.500 5h14v11.300a2.500 2.500 0 0 1-2.500 2.500H4a2.500 2.500 0 0 1-2.500-2.500z"/></svg></td></tr>
<tr class=""><td class="c k"><span class="cb"></span></td><td><a>Gross_Invoice.pdf</a></td><td></td><td>Gross_Invoice.pdf</td><td style="padding-left:34px">14/02/2024</td><td>Equator IT</td><td><svg class="ic" style="left:32.500px;margin-top:0px" width="23" height="18" viewBox="0 0 23 18" fill="none" stroke="#8f8f8f" stroke-width="2" stroke-linejoin="round"><rect x="1" y="1" width="21" height="16" rx="1.200"/><path d="M1.500 1.800 11.500 10.300 21.500 1.800"/></svg></td><td class="c k">99 KB</td><td><svg class="ic" style="left:23.700px;margin-top:-3.500px" width="18" height="18" viewBox="0 0 18 18"><path fill="#3478b8" d="M0 18 .8 13.600 11.200 3.200 14.800 6.800 4.400 17.200zM12.400 2 14 .4a1.200 1.200 0 0 1 1.700 0L17.600 2.300a1.200 1.200 0 0 1 0 1.700L16 5.600z"/></svg><svg class="ic" style="left:60.900px;margin-top:-3px" width="17" height="19" viewBox="0 0 17 19"><path fill="#3478b8" d="M5.500 0h6a.8.8 0 0 1 .8.800V1.500H17v2.300H0V1.500h4.700V.8A.8.8 0 0 1 5.500 0zM1.500 5h14v11.300a2.500 2.500 0 0 1-2.500 2.500H4a2.500 2.500 0 0 1-2.500-2.500z"/></svg></td></tr>
</table>
<div class="abs" style="left:0;top:1000px;width:1658px;height:1px;background:#dcdcdc"></div><div class="abs" style="left:0;top:1001px;width:1658px;height:3px;background:#fbfbfb"></div>

<div class="abs" style="left:1589px;top:629px;width:19px;height:23px;background:#f5f5f5;z-index:4"></div>
<div class="abs" style="left:1589px;top:652px;width:19px;height:3px;background:#fff;z-index:4"></div>
<div class="rr" style="left:1334px;top:286px;width:204px;height:79px"></div>
<div class="rr" style="left:179px;top:443px;width:156px;height:60px"></div>
<div class="rr" style="left:67px;top:554px;width:62px;height:107px"></div>
<svg class="co" width="1658" height="1004" viewBox="0 0 1658 1004">
<path fill="#f94246" d="M1321 324.5 C1306 314.5 1282 295 1260 295 A30 30 0 1 0 1260 355 C1282 355 1306 334.5 1321 324.5Z"/>
<text x="1266" y="337" text-anchor="middle">1</text>
<path fill="#f94246" d="M130 584.5 C145 574.5 177 555 199 555 A30 30 0 1 1 199 615 C177 615 145 594.5 130 584.5Z"/>
<text x="189" y="597" text-anchor="middle">2</text>
</svg>
<svg class="co" style="z-index:4" width="1658" height="1004" viewBox="0 0 1658 1004">
<path fill="#f94246" d="M333 472 C348 462 373 442 395 442 A30 30 0 1 1 395 502 C373 502 348 482 333 472Z"/>
<text x="387" y="484" text-anchor="middle">3</text>
</svg>
<svg class="abs" style="left:1589px;top:629px;z-index:7" width="14" height="20" viewBox="0 0 14 20"><path d="M1.300 1.300v15l3.500-3.200 2.300 5.200 2.200-1-2.300-5.100h4.600z" fill="#fff" stroke="#111" stroke-width="1.200" stroke-linejoin="round"/></svg>
<svg class="abs" style="left:313px;top:487px;z-index:4" width="19" height="24" viewBox="0 0 20 26"><path d="M6.500 2.300c0-.9.600-1.500 1.400-1.500s1.400.6 1.400 1.500v8.200l1-.100v-1.700c0-.8.500-1.300 1.200-1.300s1.200.5 1.200 1.300v1.900l.700-.1c0-.8.500-1.200 1.100-1.200.700 0 1.200.5 1.200 1.300v1.500c.1-.7.500-1.100 1.100-1.100.700 0 1.100.5 1.100 1.300v4.700c0 4-2.200 6.800-6 6.800-2.600 0-4.200-1-5.400-3L1.800 14.500c-.5-.8-.3-1.600.3-2 .7-.4 1.500-.2 2 .5l2.400 3z" fill="#fff" stroke="#111" stroke-width="1.100" stroke-linejoin="round"/></svg>

</body>
</html>
